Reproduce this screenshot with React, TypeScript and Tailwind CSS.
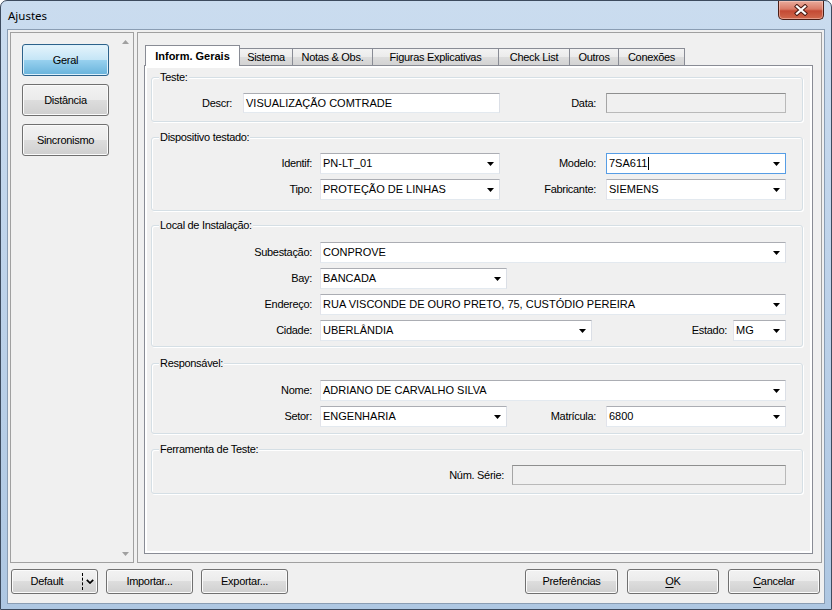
import React from "react";

const Tri = ({ color = "#000" }: { color?: string }) => (
  <svg width="7" height="4" viewBox="0 0 7 4">
    <path d="M0 0H7L3.5 4Z" fill={color} />
  </svg>
);

const TriUp = ({ color = "#a0a0a0" }: { color?: string }) => (
  <svg width="7" height="4" viewBox="0 0 7 4">
    <path d="M0 4H7L3.5 0Z" fill={color} />
  </svg>
);

const LBL = "tracking-[-0.3px] whitespace-nowrap";

function Combo({ className, value, focused }: { className: string; value: string; focused?: boolean }) {
  return (
    <div
      className={`flex h-[21px] items-center bg-white border ${
        focused
          ? "border-[#569de5]"
          : "border-[#abadb3] border-l-[#e2e3ea] border-r-[#dbdfe6] border-b-[#e3e9ef]"
      } ${className}`}
    >
      <span className="flex flex-1 items-center overflow-hidden whitespace-nowrap pl-[2px] leading-[13px]">
        {value}
        {focused && <span className="ml-[1px] inline-block h-[13px] w-px bg-black" />}
      </span>
      <span className="flex w-[17px] justify-center">
        <Tri />
      </span>
    </div>
  );
}

function TextBox({ className, value, disabled }: { className: string; value?: string; disabled?: boolean }) {
  return (
    <div
      className={`flex h-[20px] items-center border ${
        disabled
          ? "bg-[#f0f0f0] border-[#b9b9b9] border-t-[#8e8f8f] border-l-[#a5a5a5]"
          : "bg-white border-[#abadb3] border-l-[#e2e3ea] border-r-[#dbdfe6] border-b-[#e3e9ef]"
      } ${className}`}
    >
      <span className="whitespace-nowrap pl-[2px] leading-[13px]">{value}</span>
    </div>
  );
}

function Label({ className, children }: { className: string; children: React.ReactNode }) {
  return <span className={`${LBL} text-right leading-[13px] ${className}`}>{children}</span>;
}

function Group({
  label,
  className,
  boxClass,
  children,
}: {
  label: string;
  className: string;
  boxClass: string;
  children: React.ReactNode;
}) {
  return (
    <div className={`relative w-[652px] pt-[7px] ${className}`}>
      <div
        className={`flex flex-col rounded-[3px] border border-[#d5dfe5] shadow-[inset_1px_1px_0_#ffffff,1px_1px_0_#ffffff] ${boxClass}`}
      >
        {children}
      </div>
      <span className={`absolute left-[8px] top-0 bg-[#f0f0f0] px-[1px] leading-[14px] ${LBL}`}>{label}</span>
    </div>
  );
}

const BTN =
  "flex items-center justify-center rounded-[3px] border border-[#707070] bg-[linear-gradient(to_bottom,#f2f2f2_0%,#ebebeb_50%,#dddddd_50%,#cfcfcf_100%)] shadow-[inset_0_0_0_1px_#fbfbfb] text-black";

const BTN_SEL =
  "flex items-center justify-center rounded-[3px] border border-[#2c628b] bg-[linear-gradient(to_bottom,#e5f4fc_0%,#c4e5f6_50%,#98d1ef_50%,#68b3db_100%)] shadow-[inset_0_0_0_1px_#ddf1fc] text-black";

function Tab({ label, w, selected, last }: { label: string; w: string; selected?: boolean; last?: boolean }) {
  if (selected) {
    return (
      <div
        className={`relative z-10 -mb-px flex h-[21px] items-center justify-center border border-b-0 border-[#898c95] bg-white pt-[1px] font-bold ${w}`}
      >
        {label}
      </div>
    );
  }
  return (
    <div
      className={`flex h-[17px] items-center justify-center border-t border-r border-[#898c95] bg-[linear-gradient(to_bottom,#f3f3f3_0%,#ebebeb_50%,#dddddd_50%,#d3d3d3_100%)] ${LBL} ${w} ${last ? "" : ""}`}
    >
      {label}
    </div>
  );
}

export default function App() {
  return (
    <div className="flex h-[610px] w-[832px] flex-col overflow-hidden rounded-t-[7px] border border-[#3d4b5e] bg-[linear-gradient(to_bottom,#cadcef_0%,#bfd4eb_40%,#aec7e2_100%)] font-['Liberation_Sans',Arial,sans-serif] text-[11px] text-black">
      {/* Title bar */}
      <div className="flex h-[28px] items-start">
        <span className="ml-[7px] mt-[7px] font-['Noto_Sans',sans-serif] text-[11.5px] leading-[15px] text-black">
          Ajustes
        </span>
        <div className="ml-auto mr-[7px] flex h-[19px] w-[46px] items-center justify-center rounded-b-[5px] border border-t-0 border-[#4a1e16] bg-[linear-gradient(to_bottom,#e9ab9c_0%,#d97a66_45%,#c44a34_55%,#d0694d_100%)] shadow-[inset_0_0_0_1px_rgba(255,220,210,0.45)]">
          <svg width="14" height="12" viewBox="0 0 14 12">
            <path d="M3 2.5L11 9.5M11 2.5L3 9.5" stroke="#4a1a12" strokeWidth="4.2" strokeLinecap="square" />
            <path d="M3 2.5L11 9.5M11 2.5L3 9.5" stroke="#ffffff" strokeWidth="2.3" strokeLinecap="square" />
          </svg>
        </div>
      </div>

      {/* Client area */}
      <div className="mx-[6px] flex h-[575px] flex-col border border-[#8a9db3] bg-[#f0f0f0]">
        <div className="flex pl-[2px] pr-[2px] pt-[2px]">
          {/* Left panel */}
          <div className="flex h-[531px] w-[124px] border border-[#a0a0a0]">
            <div className="flex flex-1 flex-col gap-[8px] pl-[11px] pt-[11px]">
              <div className={`${BTN_SEL} h-[32px] w-[87px]`}>
                <span className={LBL}>Geral</span>
              </div>
              <div className={`${BTN} h-[32px] w-[87px]`}>
                <span className={LBL}>Distância</span>
              </div>
              <div className={`${BTN} h-[32px] w-[87px]`}>
                <span className={LBL}>Sincronismo</span>
              </div>
            </div>
            <div className="flex w-[16px] flex-col justify-between">
              <div className="flex h-[17px] items-center justify-center">
                <TriUp />
              </div>
              <div className="flex h-[17px] items-center justify-center">
                <Tri color="#a0a0a0" />
              </div>
            </div>
          </div>

          {/* Right panel */}
          <div className="ml-[3px] flex h-[531px] w-[685px] flex-col border border-[#a0a0a0] pb-[8px] pl-[6px] pr-[8px] pt-[12px]">
            {/* Tab strip */}
            <div className="flex h-[20px] items-end pl-[1px]">
              <Tab label="Inform. Gerais" w="w-[95px]" selected />
              <Tab label="Sistema" w="w-[53px]" />
              <Tab label="Notas & Obs." w="w-[80px]" />
              <Tab label="Figuras Explicativas" w="w-[126px]" />
              <Tab label="Check List" w="w-[71px]" />
              <Tab label="Outros" w="w-[49px]" />
              <Tab label="Conexões" w="w-[66px]" last />
            </div>
            {/* Pane */}
            <div className="flex flex-1 flex-col border border-[#898c95] bg-white p-[2px]">
              <div className="flex flex-1 flex-col bg-[#f0f0f0] pl-[4px] pt-[2px]">
                {/* Teste */}
                <Group label="Teste:" className="" boxClass="pt-[15px] pb-[8px]">
                  <div className="flex items-center">
                    <Label className="w-[80px]">Descr:</Label>
                    <TextBox className="ml-[11px] w-[257px]" value="VISUALIZAÇÃO COMTRADE" />
                    <Label className="w-[96px]">Data:</Label>
                    <TextBox className="ml-[10px] w-[180px]" disabled />
                  </div>
                </Group>

                {/* Dispositivo testado */}
                <Group label="Dispositivo testado:" className="mt-[8px]" boxClass="pt-[15px] pb-[10px] gap-[5px]">
                  <div className="flex items-center">
                    <Label className="w-[160px]">Identif:</Label>
                    <Combo className="ml-[8px] w-[180px]" value="PN-LT_01" />
                    <Label className="w-[96px]">Modelo:</Label>
                    <Combo className="ml-[10px] w-[180px]" value="7SA611" focused />
                  </div>
                  <div className="flex items-center">
                    <Label className="w-[160px]">Tipo:</Label>
                    <Combo className="ml-[8px] w-[180px]" value="PROTEÇÃO DE LINHAS" />
                    <Label className="w-[96px]">Fabricante:</Label>
                    <Combo className="ml-[10px] w-[180px]" value="SIEMENS" />
                  </div>
                </Group>

                {/* Local de Instalação */}
                <Group label="Local de Instalação:" className="mt-[7px]" boxClass="pt-[16px] pb-[5px] gap-[5px]">
                  <div className="flex items-center">
                    <Label className="w-[160px]">Subestação:</Label>
                    <Combo className="ml-[8px] w-[466px]" value="CONPROVE" />
                  </div>
                  <div className="flex items-center">
                    <Label className="w-[160px]">Bay:</Label>
                    <Combo className="ml-[8px] w-[187px]" value="BANCADA" />
                  </div>
                  <div className="flex items-center">
                    <Label className="w-[160px]">Endereço:</Label>
                    <Combo className="ml-[8px] w-[466px]" value="RUA VISCONDE DE OURO PRETO, 75, CUSTÓDIO PEREIRA" />
                  </div>
                  <div className="flex items-center">
                    <Label className="w-[160px]">Cidade:</Label>
                    <Combo className="ml-[8px] w-[272px]" value="UBERLÂNDIA" />
                    <Label className="w-[135px]">Estado:</Label>
                    <Combo className="ml-[6px] w-[53px]" value="MG" />
                  </div>
                </Group>

                {/* Responsável */}
                <Group label="Responsável:" className="mt-[9px]" boxClass="pt-[16px] pb-[6px] gap-[5px]">
                  <div className="flex items-center">
                    <Label className="w-[160px]">Nome:</Label>
                    <Combo className="ml-[8px] w-[466px]" value="ADRIANO DE CARVALHO SILVA" />
                  </div>
                  <div className="flex items-center">
                    <Label className="w-[160px]">Setor:</Label>
                    <Combo className="ml-[8px] w-[187px]" value="ENGENHARIA" />
                    <Label className="w-[89px]">Matrícula:</Label>
                    <Combo className="ml-[10px] w-[180px]" value="6800" />
                  </div>
                </Group>

                {/* Ferramenta de Teste */}
                <Group label="Ferramenta de Teste:" className="mt-[8px]" boxClass="pt-[15px] pb-[8px]">
                  <div className="flex items-center">
                    <Label className="w-[352px]">Núm. Série:</Label>
                    <TextBox className="ml-[8px] w-[274px]" disabled />
                  </div>
                </Group>
              </div>
            </div>
          </div>
        </div>

        {/* Bottom buttons */}
        <div className="mt-[6px] flex h-[25px] pl-[3px] pr-[4px]">
          <div className={`${BTN} h-[25px] w-[87px] justify-start`}>
            <span className={`w-[70px] text-center ${LBL}`}>Default</span>
            <span className="h-[17px] border-l border-dashed border-black" />
            <span className="flex flex-1 justify-center">
              <svg width="8" height="5" viewBox="0 0 8 5">
                <path d="M0.8 0.8L4 4L7.2 0.8" stroke="#000" strokeWidth="1.7" fill="none" />
              </svg>
            </span>
          </div>
          <div className={`${BTN} ml-[8px] h-[25px] w-[87px]`}>
            <span className={LBL}>Importar...</span>
          </div>
          <div className={`${BTN} ml-[8px] h-[25px] w-[87px]`}>
            <span className={LBL}>Exportar...</span>
          </div>
          <div className={`${BTN} ml-auto h-[25px] w-[93px]`}>
            <span className={LBL}>Preferências</span>
          </div>
          <div className={`${BTN} ml-[9px] h-[25px] w-[92px]`}>
            <span className={LBL}>
              <span className="underline underline-offset-2">O</span>K
            </span>
          </div>
          <div className={`${BTN} ml-[9px] h-[25px] w-[92px]`}>
            <span className={LBL}>
              <span className="underline underline-offset-2">C</span>ancelar
            </span>
          </div>
        </div>
      </div>
    </div>
  );
}
